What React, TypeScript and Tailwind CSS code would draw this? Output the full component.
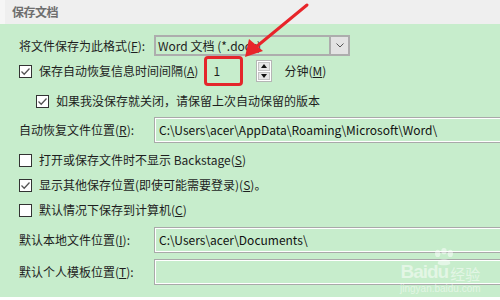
import React from 'react';

const font = { fontFamily: '"Noto Sans CJK SC", "Noto Sans", sans-serif' };

const Check: React.FC<{ checked?: boolean }> = ({ checked }) => (
  <span className="w-[13px] h-[13px] border border-[#333] bg-white flex items-center justify-center shrink-0">
    {checked && (
      <svg width="11" height="11" viewBox="0 0 11 11">
        <path d="M1.5 5.5 L4.2 8.2 L9.5 2.5" fill="none" stroke="#555" strokeWidth="1.3" />
      </svg>
    )}
  </span>
);

const PathBox: React.FC<{ value?: string }> = ({ value }) => (
  <div className="w-[360px] shrink-0 h-[26px] border border-[#a9a9a9] flex">
    <div className="flex-1 border border-white flex items-center pl-[3px] text-[#111] whitespace-nowrap overflow-hidden">
      {value}
    </div>
  </div>
);

export default function App() {
  return (
    <div className="relative w-[500px] h-[300px] overflow-hidden bg-[#c7edcc] text-[12px] text-[#1e1e1e]" style={font}>
      {/* header */}
      <div className="h-[24px] bg-[#efefef] flex items-center">
        <div className="w-[5px] h-full bg-[#f6f6f6]" />
        <span className="ml-[7px] text-[#6e6e6e] font-semibold tracking-[-0.5px]">保存文档</span>
      </div>

      <div className="pl-[19px] flex flex-col">
        {/* row 1 */}
        <div className="mt-[11px] h-[21px] flex items-center">
          <span className="w-[135px] shrink-0">将文件保存为此格式(<u>F</u>):</span>
          <div className="w-[196px] h-[21px] border-2 border-[#adadad] flex">
            <div className="flex-1 flex items-center pl-[2px] whitespace-nowrap overflow-hidden">Word 文档 (*.docx)</div>
            <div className="w-[19px] bg-[#e3e3e3] border-l-2 border-[#adadad] flex items-center justify-center">
              <svg width="8" height="5" viewBox="0 0 8 5">
                <path d="M0.5 0.5 L4 4 L7.5 0.5" fill="none" stroke="#555" strokeWidth="1" />
              </svg>
            </div>
          </div>
        </div>

        {/* row 2 */}
        <div className="mt-[2px] h-[26px] flex items-center">
          <Check checked />
          <span className="ml-[7px]">保存自动恢复信息时间间隔(<u>A</u>)</span>
          <div className="ml-[6px] w-[39px] h-[30px] border-[3px] border-[#e4262b] rounded-[4px] flex items-center pl-[6px]">1</div>
          <div className="ml-[13px] w-[16px] h-[22px] border border-[#b5b5b5] flex flex-col gap-[1px] p-[1px] bg-white">
            <div className="flex-1 bg-[#e6e6e6] border border-[#c4c4c4] flex items-center justify-center">
              <svg width="6" height="4" viewBox="0 0 6 4"><path d="M0 4 L3 0 L6 4 Z" fill="#111" /></svg>
            </div>
            <div className="flex-1 bg-[#e6e6e6] border border-[#c4c4c4] flex items-center justify-center">
              <svg width="6" height="4" viewBox="0 0 6 4"><path d="M0 0 L3 4 L6 0 Z" fill="#111" /></svg>
            </div>
          </div>
          <span className="ml-[12px]">分钟(<u>M</u>)</span>
        </div>

        {/* row 3 */}
        <div className="mt-[8px] h-[18px] flex items-center pl-[17px]">
          <Check checked />
          <span className="ml-[7px]">如果我没保存就关闭，请保留上次自动保留的版本</span>
        </div>

        {/* row 4 */}
        <div className="mt-[7px] h-[26px] flex items-center">
          <span className="w-[135px] shrink-0">自动恢复文件位置(<u>R</u>):</span>
          <PathBox value="C:\Users\acer\AppData\Roaming\Microsoft\Word\" />
        </div>

        {/* row 5 */}
        <div className="mt-[8px] h-[18px] flex items-center">
          <Check />
          <span className="ml-[7px]">打开或保存文件时不显示 Backstage(<u>S</u>)</span>
        </div>

        {/* row 6 */}
        <div className="mt-[7px] h-[18px] flex items-center">
          <Check checked />
          <span className="ml-[7px]">显示其他保存位置(即使可能需要登录)(<u>S</u>)。</span>
        </div>

        {/* row 7 */}
        <div className="mt-[7px] h-[18px] flex items-center">
          <Check />
          <span className="ml-[7px]">默认情况下保存到计算机(<u>C</u>)</span>
        </div>

        {/* row 8 */}
        <div className="mt-[8px] h-[26px] flex items-center">
          <span className="w-[135px] shrink-0">默认本地文件位置(<u>I</u>):</span>
          <PathBox value="C:\Users\acer\Documents\" />
        </div>

        {/* row 9 */}
        <div className="mt-[6px] h-[26px] flex items-center">
          <span className="w-[135px] shrink-0">默认个人模板位置(<u>T</u>):</span>
          <PathBox />
        </div>
      </div>

      <div className="absolute left-0 right-0 bottom-0 h-[3px] bg-white" />

      {/* annotation arrow */}
      <svg className="absolute left-0 top-0" width="500" height="300" viewBox="0 0 500 300">
        <path d="M307 5 L256 47" stroke="#e8252a" strokeWidth="3" strokeLinecap="round" />
        <path d="M245 57 L249 39 L263 51 Z" fill="#e8252a" />
      </svg>

      {/* watermark */}
      <div className="absolute left-[400px] top-[248px] flex flex-col items-center text-white/50 leading-none">
        <svg width="24" height="18" viewBox="0 0 26 20" className="ml-[8px]">
          <g fill="rgba(255,255,255,0.5)">
            <ellipse cx="6" cy="6" rx="3" ry="4" />
            <ellipse cx="13" cy="3.5" rx="3" ry="3.5" />
            <ellipse cx="20" cy="6" rx="3" ry="4" />
            <path d="M6 17 C6 11 20 11 20 17 C20 20 6 20 6 17 Z" />
          </g>
        </svg>
        <div className="flex items-end -mt-[4px]">
          <span className="text-[19px] font-bold tracking-[-1px]" style={{ fontFamily: '"Liberation Sans", sans-serif' }}>Baidu</span>
          <span className="text-[15px] ml-[2px]">经验</span>
        </div>
        <span className="text-[10px] mt-[3px]" style={{ fontFamily: '"Liberation Sans", sans-serif' }}>jingyan.baidu.com</span>
      </div>
    </div>
  );
}
